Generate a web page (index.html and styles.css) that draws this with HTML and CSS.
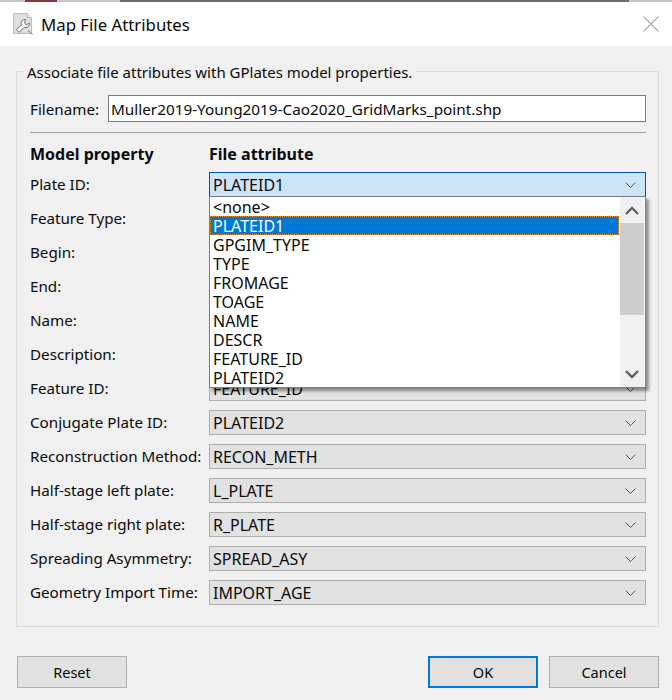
FILE: index.html
```html
<!DOCTYPE html>
<html lang="en">
<head>
  <meta charset="UTF-8">
  <title>Map File Attributes</title>
  <link rel="stylesheet" href="styles.css">
</head>
<body>
  <div class="desktop-strip">
    <span class="strip-a"></span>
    <span class="strip-r"></span>
    <span class="strip-b"></span>
    <span class="strip-c"></span>
    <span class="strip-d"></span>
  </div>

  <header class="titlebar">
    <svg class="app-icon" width="23" height="24" viewBox="0 0 23 24">
      <path d="M1.5 1.5H15.5L19.5 5.5V21.5H1.5Z" fill="#dedede" stroke="#bdbdbd"/>
      <path d="M15.5 1.5V5.5H19.5" fill="#f2f2f2" stroke="#bdbdbd"/>
      <path d="M13.5 7.5a4 4 0 0 0-4.2 5.4L4.5 17.7l2.6 2.6 4.8-4.8a4 4 0 0 0 5.4-4.6L14.6 13l-2-2Z" fill="#fdfdfd" stroke="#6e6e6e"/>
      <path d="M16 18.5l4.5 4" stroke="#9a9a9a" stroke-width="1.4" fill="none"/>
    </svg>
    <h1 class="title">Map File Attributes</h1>
    <svg class="close-icon" width="16" height="16" viewBox="0 0 16 16">
      <path d="M0.5 0.5L15.5 15.5M15.5 0.5L0.5 15.5" stroke="#a8a8a8" stroke-width="1.1" fill="none"/>
    </svg>
  </header>

  <main class="content">
    <fieldset class="group">
      <legend class="group-title">Associate file attributes with GPlates model properties.</legend>

      <div class="filename-row">
        <label class="filename-label" for="filename">Filename:</label>
        <input class="filename-input" id="filename" type="text" value="Muller2019-Young2019-Cao2020_GridMarks_point.shp">
      </div>
      <hr class="divider">

      <div class="grid">
        <div class="heading">Model property</div>
        <div class="heading">File attribute</div>

        <div class="prop">Plate ID:</div>
        <div class="combo combo-active"><span>PLATEID1</span><svg class="chevron" width="11" height="6" viewBox="0 0 11 6"><path d="M0.5 0.5L5.5 5.5L10.5 0.5" /></svg></div>

        <!-- these five combos are covered by the open popup -->
        <div class="prop">Feature Type:</div>
        <div class="combo"></div>

        <div class="prop">Begin:</div>
        <div class="combo"></div>

        <div class="prop">End:</div>
        <div class="combo"></div>

        <div class="prop">Name:</div>
        <div class="combo"></div>

        <div class="prop">Description:</div>
        <div class="combo"></div>

        <div class="prop">Feature ID:</div>
        <div class="combo"><span>FEATURE_ID</span><svg class="chevron" width="11" height="6" viewBox="0 0 11 6"><path d="M0.5 0.5L5.5 5.5L10.5 0.5" /></svg></div>

        <div class="prop">Conjugate Plate ID:</div>
        <div class="combo"><span>PLATEID2</span><svg class="chevron" width="11" height="6" viewBox="0 0 11 6"><path d="M0.5 0.5L5.5 5.5L10.5 0.5" /></svg></div>

        <div class="prop">Reconstruction Method:</div>
        <div class="combo"><span>RECON_METH</span><svg class="chevron" width="11" height="6" viewBox="0 0 11 6"><path d="M0.5 0.5L5.5 5.5L10.5 0.5" /></svg></div>

        <div class="prop">Half-stage left plate:</div>
        <div class="combo"><span>L_PLATE</span><svg class="chevron" width="11" height="6" viewBox="0 0 11 6"><path d="M0.5 0.5L5.5 5.5L10.5 0.5" /></svg></div>

        <div class="prop">Half-stage right plate:</div>
        <div class="combo"><span>R_PLATE</span><svg class="chevron" width="11" height="6" viewBox="0 0 11 6"><path d="M0.5 0.5L5.5 5.5L10.5 0.5" /></svg></div>

        <div class="prop">Spreading Asymmetry:</div>
        <div class="combo"><span>SPREAD_ASY</span><svg class="chevron" width="11" height="6" viewBox="0 0 11 6"><path d="M0.5 0.5L5.5 5.5L10.5 0.5" /></svg></div>

        <div class="prop">Geometry Import Time:</div>
        <div class="combo"><span>IMPORT_AGE</span><svg class="chevron" width="11" height="6" viewBox="0 0 11 6"><path d="M0.5 0.5L5.5 5.5L10.5 0.5" /></svg></div>
      </div>
    </fieldset>

    <div class="buttons">
      <button class="btn">Reset</button>
      <div class="buttons-right">
        <button class="btn btn-default">OK</button>
        <button class="btn">Cancel</button>
      </div>
    </div>

    <!-- open dropdown sits over the combo rows -->
    <div class="popup">
      <ul class="popup-list">
        <li>&lt;none&gt;</li>
        <li class="selected">PLATEID1</li>
        <li>GPGIM_TYPE</li>
        <li>TYPE</li>
        <li>FROMAGE</li>
        <li>TOAGE</li>
        <li>NAME</li>
        <li>DESCR</li>
        <li>FEATURE_ID</li>
        <li>PLATEID2</li>
      </ul>
      <div class="scrollbar">
        <svg class="arrow" width="14" height="9" viewBox="0 0 14 9"><path d="M1 8L7 2L13 8" /></svg>
        <div class="track"><div class="thumb"></div></div>
        <svg class="arrow" width="14" height="9" viewBox="0 0 14 9"><path d="M1 1L7 7L13 1" /></svg>
      </div>
    </div>
  </main>
</body>
</html>
```
FILE: styles.css
```css
* {
  box-sizing: border-box;
}

body {
  margin: 0;
  width: 672px;
  height: 700px;
  overflow: hidden;
  background: #f0f0f0;
  color: #0a0a0a;
  font-family: "Noto Sans", "Open Sans", sans-serif;
  font-size: 15.2px;
}

.desktop-strip {
  display: flex;
  height: 2px;
  background: #6e6e6e;
}

.strip-a {
  width: 25px;
  background: #c8c8c8;
}

.strip-r {
  width: 32px;
  background: #7a3a3e;
}

.strip-b {
  width: 63px;
  background: #c4c8cc;
}

.strip-c {
  flex: 1;
}

.strip-d {
  width: 43px;
  background: #c4c4c4;
}

/* title bar */
.titlebar {
  display: flex;
  align-items: center;
  height: 44px;
  padding: 0 13px 0 12px;
  background: #fff;
}

.app-icon {
  flex: none;
  margin-right: 6px;
}

.title {
  flex: 1;
  margin: 0;
  font-size: 16.8px;
  font-weight: 400;
}

/* dialog body */
.content {
  position: relative;
  padding: 25px 13px 0 16px;
}

.group {
  height: 556px;
  margin: 0;
  padding: 0 12px 0 13px;
  border: 1px solid #dcdcdc;
}

.group-title {
  float: left;
  margin-top: -10px;
  margin-left: -7px;
  padding: 0 4px;
  line-height: 20px;
  background: #f0f0f0;
  font-size: 15px;
}

.filename-row {
  clear: both;
  display: flex;
  align-items: center;
  padding-top: 13px;
}

.filename-label {
  width: 78px;
}

.filename-input {
  flex: 1;
  height: 27px;
  padding: 0 2px;
  border: 1px solid #7a7a7a;
  background: #fff;
  color: #0a0a0a;
  font: inherit;
  font-size: 15.3px;
  outline: none;
}

.divider {
  height: 1px;
  margin: 10px 0 0;
  border: 0;
  background: #a0a0a0;
}

.grid {
  display: grid;
  grid-template-columns: 179px 1fr;
  grid-auto-rows: 25px;
  row-gap: 9px;
  align-items: center;
  margin-top: 6px;
}

.heading {
  margin-bottom: -5px;
  font-size: 16px;
  font-weight: 700;
}

.prop {
  margin-top: -4px;
}

.combo {
  display: flex;
  align-items: center;
  justify-content: space-between;
  height: 25px;
  margin-top: -2px;
  padding: 0 9px 0 3px;
  border: 1px solid #adadad;
  background: #e1e1e1;
  font-size: 16px;
}

.combo-active {
  border-color: #005499;
  background: #cce4f7;
}

.chevron {
  fill: none;
  stroke: #555;
  stroke-width: 1;
}

/* buttons */
.buttons {
  display: flex;
  justify-content: space-between;
  padding: 29px 0 0 1px;
}

.buttons-right {
  display: flex;
  gap: 11px;
}

.btn {
  width: 110px;
  height: 32px;
  padding: 0;
  border: 1px solid #adadad;
  background: #e1e1e1;
  color: #0a0a0a;
  font: inherit;
  font-size: 14.5px;
}

.btn-default {
  border: 2px solid #0078d7;
}

/* combo popup */
.popup {
  position: absolute;
  left: 209px;
  top: 150px;
  display: flex;
  width: 437px;
  height: 192px;
  border: 1px solid #7a7a80;
  background: #fff;
  box-shadow: 3px 3px 3px rgba(0, 0, 0, 0.4);
}

.popup-list {
  flex: 1;
  margin: 0;
  padding: 0;
  list-style: none;
  font-size: 16px;
}

.popup-list li {
  height: 19px;
  padding: 0 3px;
  line-height: 21px;
}

.popup-list .selected {
  outline: 1px dotted #e8902a;
  outline-offset: -1px;
  background: #0078d7;
  color: #fff;
}

.scrollbar {
  display: flex;
  flex-direction: column;
  align-items: center;
  justify-content: space-between;
  width: 24px;
  margin-left: 1px;
  margin-right: 1px;
  background: #f0f0f0;
}

.arrow {
  flex: none;
  margin: 9px 0 8px;
  fill: none;
  stroke: #606060;
  stroke-width: 2.4;
}

.track {
  flex: 1;
  width: 100%;
}

.thumb {
  width: 100%;
  height: 92px;
  background: #cdcdcd;
}
```
